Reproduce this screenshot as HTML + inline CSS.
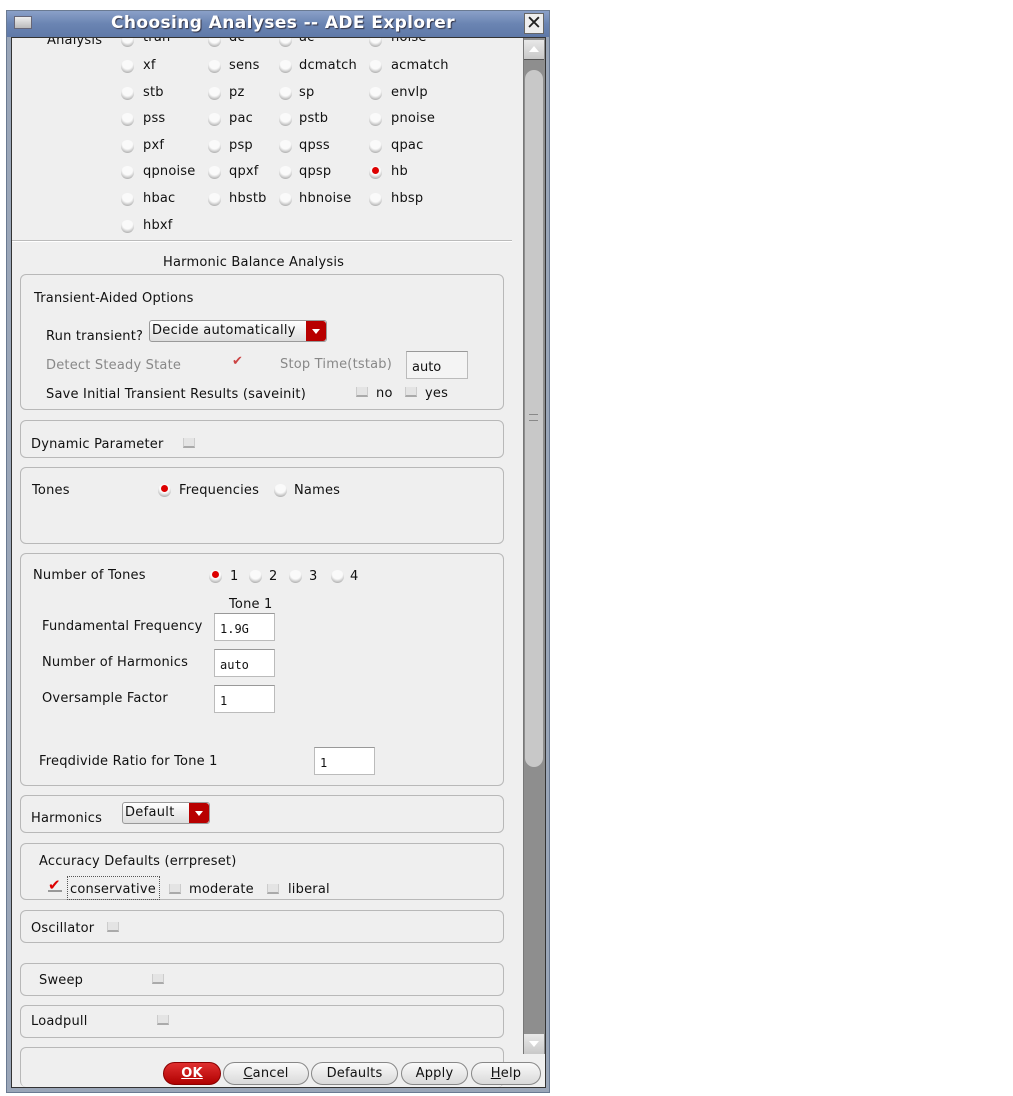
<!DOCTYPE html>
<html><head><meta charset="utf-8"><style>
*{box-sizing:border-box;margin:0;padding:0}
body{width:1013px;height:1096px;background:#fff;position:relative;font-family:"DejaVu Sans","Liberation Sans",sans-serif;font-size:13px;letter-spacing:0.2px;color:#111;overflow:hidden}
.a{position:absolute;white-space:nowrap}
#win{position:absolute;left:6px;top:10px;width:544px;height:1083px;background:#9aa6b8;border:1px solid #6a7a92}
#title{position:absolute;left:7px;top:11px;width:542px;height:26px;background:linear-gradient(#8aa0c8,#6a84b2 50%,#5f79a8);}
#content{position:absolute;left:11px;top:37px;width:535px;height:1051px;background:#efefef;border:1px solid #333;overflow:hidden}
.r{position:absolute;width:13px;height:13px;border-radius:50%;background:radial-gradient(circle at 50% 30%,#fafafa 45%,#e0e0e0 58%,#888 100%)}
.r.on::after{content:"";position:absolute;left:3px;top:1px;width:7px;height:7px;border-radius:50%;background:#d00}
.p{position:absolute;left:8px;width:484px;border:1px solid #b8b8b8;border-radius:6px}
.cb{position:absolute;width:12px;height:10px;border-bottom:2px solid #aaa;border-left:1px solid #ccc;border-right:1px solid #ccc;background:#e4e4e4}
.in{position:absolute;background:#fff;border:1px solid #bbb;border-top-color:#999;font-family:"DejaVu Sans Mono","Liberation Mono",monospace;font-size:12px;letter-spacing:0;padding:8px 0 0 5px}
.btn{position:absolute;top:1024px;height:23px;border:1px solid #888;border-radius:12px;background:linear-gradient(#fafafa,#d9d9d9);text-align:center;line-height:22px;font-size:13px}
.dd{position:absolute;height:22px;border:1px solid #999;border-radius:3px;background:linear-gradient(#fff,#ddd);padding-left:2px;line-height:20px;font-size:13px;letter-spacing:0.3px}
.dd b{position:absolute;right:0;top:0;width:20px;height:20px;background:#b80000;border-radius:0 3px 3px 0}
.dd b::after{content:"";position:absolute;left:6px;top:8px;border:4px solid transparent;border-top:5px solid #fff}
</style></head><body>
<div id="win"></div>
<div id="title"></div>
<div class="a" style="left:14px;top:16px;width:18px;height:13px;background:linear-gradient(#eee,#bbb);border:1px solid #667"></div>
<div class="a" style="left:111px;top:13px;color:#fff;font-weight:bold;font-size:17px;letter-spacing:0.4px;text-shadow:1px 1px 1px #334">Choosing Analyses -- ADE Explorer</div>
<div class="a" style="left:524px;top:13px;width:20px;height:21px;background:#eee;border:1px solid #666;font-size:19px;line-height:19px;text-align:center;font-weight:bold;color:#222">✕</div>
<div id="content">
<div class="a" style="left:35px;top:-5px">Analysis</div>
<div class="r" style="left:109px;top:-4px"></div><div class="a" style="left:131px;top:-8px">tran</div>
<div class="r" style="left:196px;top:-4px"></div><div class="a" style="left:217px;top:-8px">dc</div>
<div class="r" style="left:267px;top:-4px"></div><div class="a" style="left:287px;top:-8px">ac</div>
<div class="r" style="left:357px;top:-4px"></div><div class="a" style="left:379px;top:-8px">noise</div>

<div class="r" style="left:109px;top:22px"></div><div class="a" style="left:131px;top:20px">xf</div>
<div class="r" style="left:196px;top:22px"></div><div class="a" style="left:217px;top:20px">sens</div>
<div class="r" style="left:267px;top:22px"></div><div class="a" style="left:287px;top:20px">dcmatch</div>
<div class="r" style="left:357px;top:22px"></div><div class="a" style="left:379px;top:20px">acmatch</div>

<div class="r" style="left:109px;top:49px"></div><div class="a" style="left:131px;top:47px">stb</div>
<div class="r" style="left:196px;top:49px"></div><div class="a" style="left:217px;top:47px">pz</div>
<div class="r" style="left:267px;top:49px"></div><div class="a" style="left:287px;top:47px">sp</div>
<div class="r" style="left:357px;top:49px"></div><div class="a" style="left:379px;top:47px">envlp</div>

<div class="r" style="left:109px;top:75px"></div><div class="a" style="left:131px;top:73px">pss</div>
<div class="r" style="left:196px;top:75px"></div><div class="a" style="left:217px;top:73px">pac</div>
<div class="r" style="left:267px;top:75px"></div><div class="a" style="left:287px;top:73px">pstb</div>
<div class="r" style="left:357px;top:75px"></div><div class="a" style="left:379px;top:73px">pnoise</div>

<div class="r" style="left:109px;top:102px"></div><div class="a" style="left:131px;top:100px">pxf</div>
<div class="r" style="left:196px;top:102px"></div><div class="a" style="left:217px;top:100px">psp</div>
<div class="r" style="left:267px;top:102px"></div><div class="a" style="left:287px;top:100px">qpss</div>
<div class="r" style="left:357px;top:102px"></div><div class="a" style="left:379px;top:100px">qpac</div>

<div class="r" style="left:109px;top:128px"></div><div class="a" style="left:131px;top:126px">qpnoise</div>
<div class="r" style="left:196px;top:128px"></div><div class="a" style="left:217px;top:126px">qpxf</div>
<div class="r" style="left:267px;top:128px"></div><div class="a" style="left:287px;top:126px">qpsp</div>
<div class="r on" style="left:357px;top:128px"></div><div class="a" style="left:379px;top:126px">hb</div>

<div class="r" style="left:109px;top:155px"></div><div class="a" style="left:131px;top:153px">hbac</div>
<div class="r" style="left:196px;top:155px"></div><div class="a" style="left:217px;top:153px">hbstb</div>
<div class="r" style="left:267px;top:155px"></div><div class="a" style="left:287px;top:153px">hbnoise</div>
<div class="r" style="left:357px;top:155px"></div><div class="a" style="left:379px;top:153px">hbsp</div>

<div class="r" style="left:109px;top:182px"></div><div class="a" style="left:131px;top:180px">hbxf</div>

<div class="a" style="left:0;top:202px;width:500px;height:2px;border-top:1px solid #bbb;border-bottom:1px solid #fff"></div>
<div class="a" style="left:151px;top:217px">Harmonic Balance Analysis</div>

<div class="p" style="top:236px;height:136px"></div>
<div class="a" style="left:22px;top:253px">Transient-Aided Options</div>
<div class="a" style="left:34px;top:291px">Run transient?</div>
<div class="dd" style="left:137px;top:282px;width:178px">Decide automatically<b></b></div>
<div class="a" style="left:34px;top:320px;color:#888">Detect Steady State</div>
<div class="a" style="left:220px;top:316px;color:#c44;font-size:13px">✔</div>
<div class="a" style="left:268px;top:319px;color:#888">Stop Time(tstab)</div>
<div class="in" style="left:394px;top:313px;width:62px;height:28px;background:#f4f4f4;font-family:'DejaVu Sans',sans-serif;font-size:13px">auto</div>
<div class="a" style="left:34px;top:349px">Save Initial Transient Results (saveinit)</div>
<div class="cb" style="left:344px;top:349px"></div><div class="a" style="left:364px;top:348px">no</div>
<div class="cb" style="left:393px;top:349px"></div><div class="a" style="left:413px;top:348px">yes</div>

<div class="p" style="top:382px;height:38px"></div>
<div class="a" style="left:19px;top:399px">Dynamic Parameter</div>
<div class="cb" style="left:171px;top:400px"></div>

<div class="p" style="top:429px;height:77px"></div>
<div class="a" style="left:20px;top:445px">Tones</div>
<div class="r on" style="left:146px;top:446px"></div><div class="a" style="left:167px;top:445px">Frequencies</div>
<div class="r" style="left:262px;top:446px"></div><div class="a" style="left:282px;top:445px">Names</div>

<div class="p" style="top:515px;height:233px"></div>
<div class="a" style="left:21px;top:530px">Number of Tones</div>
<div class="r on" style="left:197px;top:532px"></div><div class="a" style="left:218px;top:531px">1</div>
<div class="r" style="left:237px;top:532px"></div><div class="a" style="left:257px;top:531px">2</div>
<div class="r" style="left:277px;top:532px"></div><div class="a" style="left:297px;top:531px">3</div>
<div class="r" style="left:319px;top:532px"></div><div class="a" style="left:338px;top:531px">4</div>
<div class="a" style="left:217px;top:559px">Tone 1</div>
<div class="a" style="left:30px;top:581px">Fundamental Frequency</div>
<div class="in" style="left:202px;top:575px;width:61px;height:28px">1.9G</div>
<div class="a" style="left:30px;top:617px">Number of Harmonics</div>
<div class="in" style="left:202px;top:611px;width:61px;height:28px">auto</div>
<div class="a" style="left:30px;top:653px">Oversample Factor</div>
<div class="in" style="left:202px;top:647px;width:61px;height:28px">1</div>
<div class="a" style="left:27px;top:716px">Freqdivide Ratio for Tone 1</div>
<div class="in" style="left:302px;top:709px;width:61px;height:28px">1</div>

<div class="p" style="top:757px;height:38px"></div>
<div class="a" style="left:19px;top:773px">Harmonics</div>
<div class="dd" style="left:110px;top:764px;width:88px">Default<b></b></div>

<div class="p" style="top:805px;height:57px"></div>
<div class="a" style="left:27px;top:816px">Accuracy Defaults (errpreset)</div>
<div class="a" style="left:36px;top:838px;color:#d00;font-size:15px">✔</div>
<div class="a" style="left:36px;top:852px;width:14px;height:2px;background:#999"></div>
<div class="a" style="left:55px;top:838px;width:93px;height:24px;border:1px dotted #555"></div>
<div class="a" style="left:58px;top:844px">conservative</div>
<div class="cb" style="left:157px;top:846px"></div><div class="a" style="left:177px;top:844px">moderate</div>
<div class="cb" style="left:255px;top:846px"></div><div class="a" style="left:276px;top:844px">liberal</div>

<div class="p" style="top:872px;height:33px"></div>
<div class="a" style="left:19px;top:883px">Oscillator</div>
<div class="cb" style="left:95px;top:884px"></div>

<div class="p" style="top:925px;height:33px"></div>
<div class="a" style="left:27px;top:935px">Sweep</div>
<div class="cb" style="left:140px;top:936px"></div>

<div class="p" style="top:967px;height:33px"></div>
<div class="a" style="left:19px;top:976px">Loadpull</div>
<div class="cb" style="left:145px;top:977px"></div>

<div class="p" style="top:1009px;height:40px;border-bottom:none"></div>

<div class="a" style="left:511px;top:0;width:22px;height:1016px;background:#8e8e8e;border-left:1px solid #777"></div>
<div class="a" style="left:512px;top:2px;width:20px;height:20px;background:linear-gradient(#e8e8e8,#c8c8c8);border-bottom:1px solid #555"></div>
<div class="a" style="left:517px;top:8px;border:5px solid transparent;border-bottom:6px solid #fff;border-top:none"></div>
<div class="a" style="left:513px;top:32px;width:18px;height:697px;background:#c8c8c8;border-radius:9px"></div>
<div class="a" style="left:517px;top:376px;width:9px;height:7px;border-top:1px solid #888;border-bottom:1px solid #888"></div>
<div class="a" style="left:512px;top:996px;width:20px;height:20px;background:linear-gradient(#e8e8e8,#c8c8c8)"></div>
<div class="a" style="left:517px;top:1003px;border:5px solid transparent;border-top:6px solid #fff;border-bottom:none"></div>

<div class="btn" style="left:151px;width:58px;background:linear-gradient(#e03030,#b00000);color:#fff;font-weight:bold;border-color:#800"><u>OK</u></div>
<div class="btn" style="left:211px;width:86px"><u>C</u>ancel</div>
<div class="btn" style="left:299px;width:87px">Defaults</div>
<div class="btn" style="left:389px;width:67px">Apply</div>
<div class="btn" style="left:459px;width:70px"><u>H</u>elp</div>
</div>
</body></html>
